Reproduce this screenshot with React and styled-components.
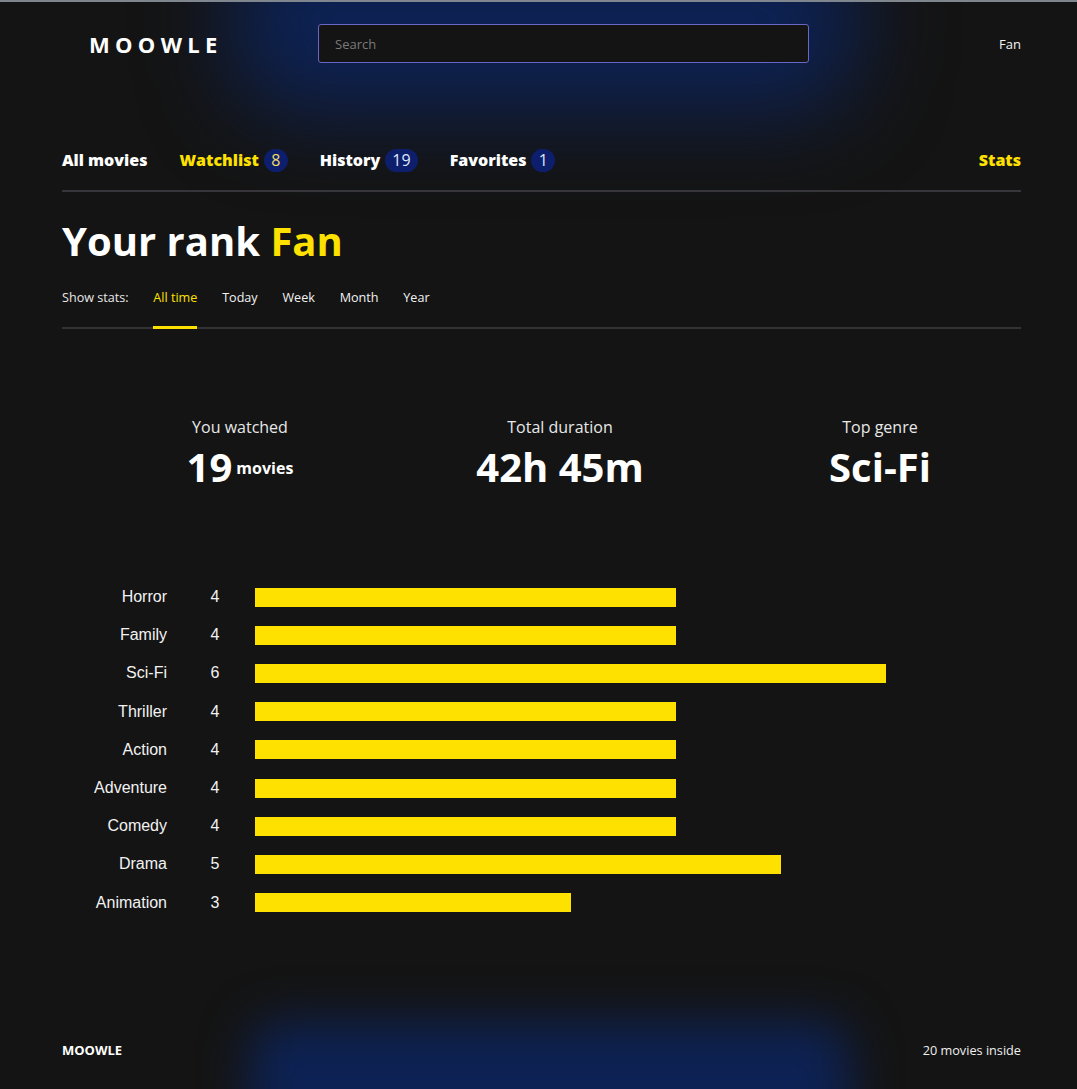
import React from "react";
import styled, { createGlobalStyle } from "styled-components";

const GlobalStyle = createGlobalStyle`
  html, body { margin: 0; padding: 0; background: #141414; }
  body { font-family: "Open Sans", "DejaVu Sans", sans-serif; color: #fff; }
  * { box-sizing: border-box; }
`;

const YELLOW = "#ffe100";

const Page = styled.div`
  position: relative;
  min-height: 1089px;
  background: #141414;
  border-top: 2px solid #7f868d;
  overflow: hidden;
`;

const Glow = styled.div`
  position: absolute;
  left: ${(p) => p.$left}px;
  top: ${(p) => p.$top}px;
  width: ${(p) => p.$width}px;
  height: ${(p) => p.$height}px;
  background: #0d2254;
  filter: blur(${(p) => p.$blur}px);
  border-radius: ${(p) => p.$radius}px;
  z-index: 0;
  pointer-events: none;
`;

const Container = styled.div`
  position: relative;
  z-index: 1;
  margin: 0 56px 0 62px;
`;

const Header = styled.header`
  display: flex;
  align-items: center;
  height: 39px;
  margin-top: 22px;
`;

const Logo = styled.div`
  width: 256px;
  padding-left: 27px;
  font-size: 22px;
  font-weight: 700;
  letter-spacing: 5.3px;
  color: #fff;
`;

const Search = styled.input`
  width: 491px;
  height: 39px;
  background: #141414;
  border: 1px solid #6a66c6;
  border-radius: 3px;
  padding: 0 16px;
  font-family: "Open Sans", sans-serif;
  font-size: 13px;
  color: #ddd;
  outline: none;
  &::placeholder { color: #7a7a7a; }
`;

const HeaderUser = styled.div`
  margin-left: auto;
  font-size: 13px;
  color: #f2f2f2;
`;

const Nav = styled.nav`
  display: flex;
  align-items: center;
  gap: 32px;
  margin-top: 85px;
  padding-bottom: 18px;
  border-bottom: 2px solid #36363a;
`;

const NavLink = styled.a`
  display: flex;
  align-items: center;
  gap: 5px;
  height: 24px;
  font-size: 16px;
  font-weight: 800;
  color: ${(p) => (p.$active ? YELLOW : "#fff")};
  text-decoration: none;
  &:last-child { margin-left: auto; }
`;

const Badge = styled.span`
  display: inline-flex;
  align-items: center;
  justify-content: center;
  min-width: 24px;
  height: 23px;
  padding: 0 7px;
  border-radius: 12px;
  background: #0d1f6c;
  font-weight: 400;
  font-size: 16px;
  color: ${(p) => (p.$active ? "#f0dc6a" : "#dfe6ff")};
`;

const Title = styled.h1`
  margin: 25px 0 0;
  font-size: 40px;
  line-height: 48px;
  font-weight: 700;
  color: #fff;
`;

const Accent = styled.span`
  color: ${YELLOW};
`;

const Tabs = styled.div`
  display: flex;
  align-items: flex-start;
  gap: 24.8px;
  margin-top: 24px;
  border-bottom: 2px solid #333336;
  font-size: 12.6px;
  line-height: 18px;
`;

const TabLabel = styled.span`
  color: #e8e8e8;
`;

const Tab = styled.span`
  padding-bottom: 19px;
  margin-bottom: -2px;
  border-bottom: 3px solid ${(p) => (p.$active ? YELLOW : "transparent")};
  color: ${(p) => (p.$active ? YELLOW : "#f2f2f2")};
`;

const StatsRow = styled.section`
  display: grid;
  grid-template-columns: repeat(3, 320px);
  margin: 87px 0 0 18px;
`;

const Stat = styled.div`
  display: flex;
  flex-direction: column;
  align-items: center;
  gap: 5px;
`;

const StatLabel = styled.div`
  font-size: 16px;
  line-height: 22px;
  color: #e8e8e8;
`;

const StatValue = styled.div`
  font-size: 40px;
  line-height: 48px;
  font-weight: 700;
  color: #fff;
  white-space: nowrap;
`;

const StatUnit = styled.span`
  font-size: 16px;
  margin-left: 4px;
  position: relative;
  top: -8px;
`;

const Chart = styled.section`
  margin-top: 78px;
  display: flex;
  flex-direction: column;
  font-family: "Liberation Sans", Arial, sans-serif;
  font-size: 16px;
  color: #f2f2f2;
`;

const ChartRow = styled.div`
  display: grid;
  grid-template-columns: 105px 88px 1fr;
  align-items: center;
  height: 38.2px;
`;

const GenreName = styled.div`
  text-align: right;
`;

const GenreCount = styled.div`
  text-align: center;
  padding-left: 8px;
`;

const Bar = styled.div`
  height: 19px;
  background: ${YELLOW};
`;

const Footer = styled.footer`
  position: relative;
  z-index: 1;
  display: flex;
  align-items: center;
  justify-content: space-between;
  height: 79px;
  margin: 89px 56px 0 62px;
`;

const FooterLogo = styled.div`
  font-size: 13px;
  font-weight: 700;
  color: #fff;
`;

const FooterNote = styled.div`
  font-size: 12.7px;
  color: #f0f0f0;
`;

const genres = [
  ["Horror", 4],
  ["Family", 4],
  ["Sci-Fi", 6],
  ["Thriller", 4],
  ["Action", 4],
  ["Adventure", 4],
  ["Comedy", 4],
  ["Drama", 5],
  ["Animation", 3],
];

export default function App() {
  return (
    <>
      <GlobalStyle />
      <Page>
        <Glow $left={232} $top={-70} $width={625} $height={180} $blur={44} $radius={60} />
        <Glow $left={250} $top={1020} $width={600} $height={130} $blur={24} $radius={30} />
        <Container>
          <Header>
            <Logo>MOOWLE</Logo>
            <Search placeholder="Search" />
            <HeaderUser>Fan</HeaderUser>
          </Header>
          <Nav>
            <NavLink>All movies</NavLink>
            <NavLink $active>
              Watchlist <Badge $active>8</Badge>
            </NavLink>
            <NavLink>
              History <Badge>19</Badge>
            </NavLink>
            <NavLink>
              Favorites <Badge>1</Badge>
            </NavLink>
            <NavLink $active>Stats</NavLink>
          </Nav>
          <Title>
            Your rank <Accent>Fan</Accent>
          </Title>
          <Tabs>
            <TabLabel>Show stats:</TabLabel>
            <Tab $active>All time</Tab>
            <Tab>Today</Tab>
            <Tab>Week</Tab>
            <Tab>Month</Tab>
            <Tab>Year</Tab>
          </Tabs>
          <StatsRow>
            <Stat>
              <StatLabel>You watched</StatLabel>
              <StatValue>
                19<StatUnit>movies</StatUnit>
              </StatValue>
            </Stat>
            <Stat>
              <StatLabel>Total duration</StatLabel>
              <StatValue>42h 45m</StatValue>
            </Stat>
            <Stat>
              <StatLabel>Top genre</StatLabel>
              <StatValue>Sci-Fi</StatValue>
            </Stat>
          </StatsRow>
          <Chart>
            {genres.map(([name, count]) => (
              <ChartRow key={name}>
                <GenreName>{name}</GenreName>
                <GenreCount>{count}</GenreCount>
                <Bar style={{ width: `${count * 105.2}px` }} />
              </ChartRow>
            ))}
          </Chart>
        </Container>
        <Footer>
          <FooterLogo>MOOWLE</FooterLogo>
          <FooterNote>20 movies inside</FooterNote>
        </Footer>
      </Page>
    </>
  );
}
